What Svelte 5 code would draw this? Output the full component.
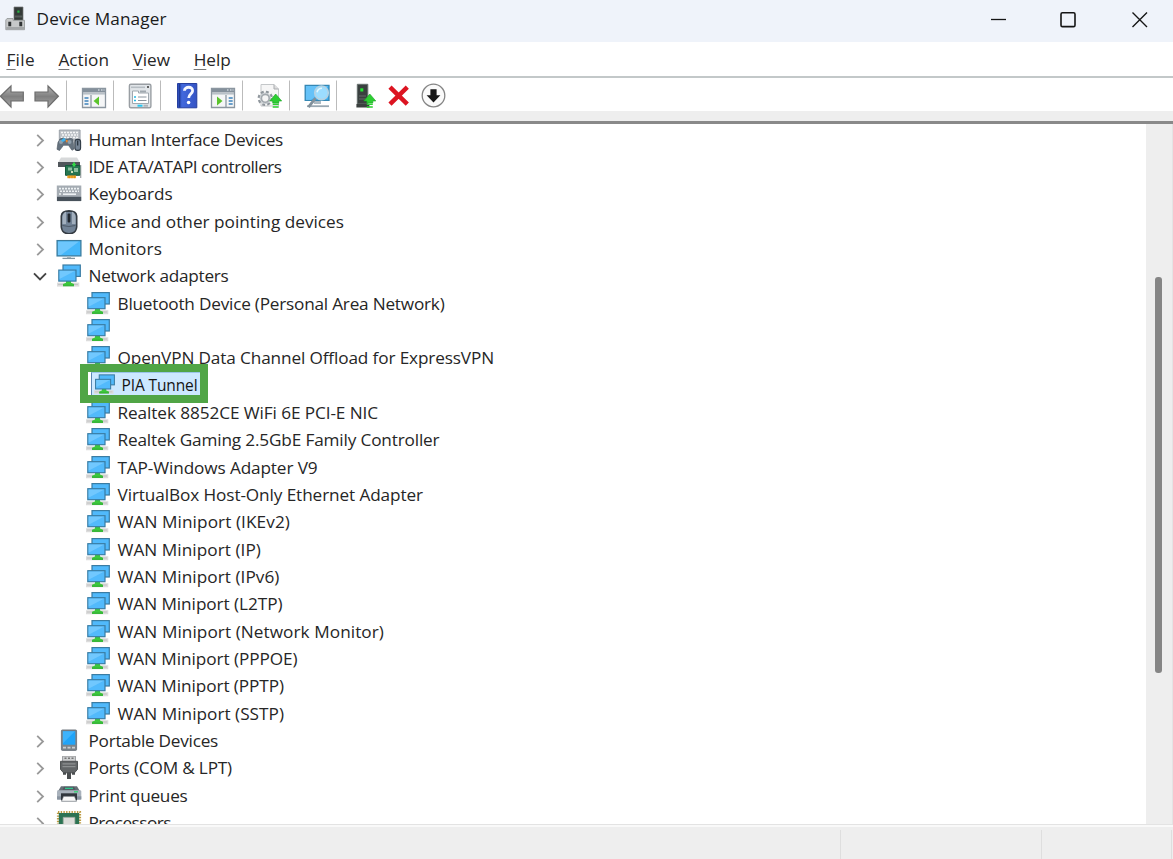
<script>
  const before = [
    ['hid', 'Human Interface Devices', 194.5],
    ['ide', 'IDE ATA/ATAPI controllers', 193],
    ['keyboard', 'Keyboards', 84],
    ['mouse', 'Mice and other pointing devices', 255.5],
    ['monitor', 'Monitors', 73.5],
  ];
  const adapters = [
    ['Bluetooth Device (Personal Area Network)', 327],
    ['', 0],
    ['OpenVPN Data Channel Offload for ExpressVPN', 376.5],
    ['', 0],
    ['Realtek 8852CE WiFi 6E PCI-E NIC', 260.5],
    ['Realtek Gaming 2.5GbE Family Controller', 322],
    ['TAP-Windows Adapter V9', 200],
    ['VirtualBox Host-Only Ethernet Adapter', 305.5],
    ['WAN Miniport (IKEv2)', 172.5],
    ['WAN Miniport (IP)', 143.5],
    ['WAN Miniport (IPv6)', 162],
    ['WAN Miniport (L2TP)', 165],
    ['WAN Miniport (Network Monitor)', 266.5],
    ['WAN Miniport (PPPOE)', 180],
    ['WAN Miniport (PPTP)', 166.5],
    ['WAN Miniport (SSTP)', 166.5],
  ];
  const after = [
    ['portable', 'Portable Devices', 129.5],
    ['port', 'Ports (COM & LPT)', 143.5],
    ['printer', 'Print queues', 99],
    ['cpu', 'Processors', 82.5],
  ];
  const menu = [['F', 'ile', 28.5], ['A', 'ction', 50.5], ['V', 'iew', 37.5], ['H', 'elp', 37]];

  // Spreads the letters so that a label takes its design width.
  function fit(node, width) {
    const n = node.textContent.length;
    if (n) node.style.letterSpacing = (width - node.getBoundingClientRect().width) / n + 'px';
  }
</script>

{#snippet upArrow()}
  <path d="M0 7L6 0l6 7H9v2H3V7z" fill="#2dce32" stroke="#18a522" stroke-width=".6" />
  <path d="M3 10.3h6M3 13h6" stroke="#2dce32" stroke-width="1.5" />
{/snippet}

{#snippet icon(name)}
  <svg class="ico" width="26" height="24" viewBox="0 0 26 24">
    {#if name === 'network'}
      <g transform="translate(0 -.9)">
        <rect x="7" y="1.9" width="17.3" height="11.4" fill="#50b9fb" stroke="#3a7ca3" stroke-width="1.2" />
        <path d="M1 19.5h22.3v4H1z" fill="#dcdcdc" />
        <path d="M2 21.3h20" stroke="#c2c2c2" />
        <path d="M10 17h5v2.7l3 1.3v2H7v-2l3-1.3z" fill="#3cc83c" />
        <path d="M7 21.5h11v1.7H7z" fill="#39b73a" />
        <rect x="2.8" y="7" width="17.2" height="11" fill="#52bafc" stroke="#3a7ca3" stroke-width="1.2" />
        <path d="M3.5 7.7h15.8L3.5 16z" fill="#8bd4ff" opacity=".55" />
      </g>
    {:else if name === 'monitor'}
      <rect x="1.1" y="3.6" width="23.8" height="15.3" fill="#45b7fa" stroke="#3b7c9e" stroke-width="1.3" />
      <path d="M2 4.4h21L5 18H2z" fill="#8fd5ff" opacity=".55" />
      <path d="M11 19.5h4v1.5h-4z" fill="#aebac0" /><path d="M6.5 21.4h12.5" stroke="#8195a0" stroke-width="1.3" />
    {:else if name === 'keyboard'}
      <path d="M.8 3.5h24.5v15.3H.8z" fill="#a5acb3" />
      <path d="M1 14.8h24.2v4.3H1z" fill="#48525b" />
      <path d="M3 6.6h20M4 9.3h19M3 12h2" stroke="#eef2f4" stroke-width="1.6" stroke-dasharray="2 1" /><path d="M7 12.2h13" stroke="#eef2f4" stroke-width="1.6" />
    {:else if name === 'hid'}
      <path d="M3.3 2h20.8v10H3.3z" fill="#bdc2c7" stroke="#8f979e" stroke-width=".8" />
      <path d="M5 4.5h17M6 7h16M5 9.5h17" stroke="#f5f6f7" stroke-width="1.4" stroke-dasharray="2 1" />
      <path d="M4 11q3-2 5 0h3q4-2 5 1l1 9-2 1.3-3.5-5H7.5l-4 5.2-2.5-1.2 1-7z" fill="#65727e" stroke="#47535e" stroke-width=".6" />
      <circle cx="5" cy="14" r="2" fill="#8fa0ad" /><circle cx="13.5" cy="14" r="2" fill="#8fa0ad" />
      <path d="M5 12.5L8 9.7l2 2.3-3 2z" fill="#3bb2ee" /><path d="M9.5 11.5l2.8 1.2-1.8 2z" fill="#ee872c" />
      <rect x="18.9" y="11.4" width="5.7" height="11" rx="2.5" fill="#758494" stroke="#2f3a45" stroke-width="1.1" /><path d="M21.7 12.5v5" stroke="#222d36" stroke-width="1.2" />
    {:else if name === 'ide'}
      <path d="M5 2.5h16l3 5H2z" fill="#d7d9da" /><path d="M2 7h22v5H2z" fill="#50565b" />
      <path d="M24.7 10v13" stroke="#9da1a3" stroke-width="1.2" />
      <path d="M9.5 10.5h14.3v9.8H9.5z" fill="#277650" stroke="#155a3c" />
      <path d="M12 12.5h4v3h-4zM18 13h4v4h-4z" fill="#8abf9d" /><path d="M15 16h2v2h-2z" fill="#d0e1b9" />
      <path d="M17 7.5h2v4h-2zM16 9h4v1.3h-4z" fill="#31d747" />
      <path d="M11.3 20.5H20v2.7h-8.7z" fill="#f2a526" /><path d="M13.3 20.5v2.7M16 20.5v2.7M18.5 20.5v2.7" stroke="#c77f17" stroke-width=".6" />
    {:else if name === 'mouse'}
      <path d="M5.3 6Q5.8 1 13 .9q7.2.1 7.7 5.1v11q-.7 6.7-7.7 6.7T5.3 17z" fill="#718295" stroke="#343b42" stroke-width="1.6" />
      <path d="M6.5 14V7q.5-4.5 3.5-5.2V14zM19.5 14V7q-.5-4.5-3.5-5.2V14z" fill="#a2afbd" />
      <path d="M6.4 15.5q6.5 2 13 0" fill="none" stroke="#4d5967" /><rect x="11.6" y="3.6" width="2.8" height="9" rx="1" fill="#20262d" />
    {:else if name === 'portable'}
      <g transform="translate(0 -.8)">
        <rect x="5.4" y="1.7" width="15.2" height="20.5" rx="1" fill="#7b848b" stroke="#59626a" stroke-width=".7" />
        <path d="M6.8 3h12.5v13.5H6.8z" fill="#20a4f8" /><path d="M7 3h12L7 15z" fill="#58c0ff" opacity=".55" />
        <path d="M7 19.4h3M11.5 19.4h3M16 19.4h3" stroke="#c9cdd0" stroke-width="1.8" />
      </g>
    {:else if name === 'port'}
      <g transform="translate(0 -.7)">
        <path d="M6.5.9h13v6h-13z" fill="#cdcfd0" stroke="#8e9193" stroke-width=".8" />
        <path d="M8.5 3h2M12 3h2M15.5 3h2" stroke="#777" stroke-width="1.5" />
        <path d="M4.5 6h17v8l-3 3.5h-11l-3-3.5z" fill="#626567" stroke="#505354" />
        <path d="M6.5 8.5h13M6.5 11.3h13" stroke="#8d9091" stroke-width="1.2" />
        <path d="M7 17h3v2.5H7zM16 17h3v2.5h-3zM11 17h4v6.8h-4z" fill="#4a4d4f" />
      </g>
    {:else if name === 'printer'}
      <g transform="translate(0 -.7)">
        <path d="M5 3h16l3 5H2z" fill="#666e76" /><path d="M8 3.5h10l1.5 3h-13z" fill="#505860" /><path d="M9 5h8" stroke="#2cdb94" stroke-width="1.1" />
        <rect x="1" y="7" width="24.3" height="9.3" rx="1.3" fill="#a9b2bc" /><path d="M1 13h24.3v3.3H1z" fill="#8994a0" />
        <path d="M18 8.5h4" stroke="#35d574" stroke-width="1.3" />
        <path d="M5 10h16v7H5z" fill="#31373d" /><path d="M7.5 13h11l2 5h-15z" fill="#f8f8f8" stroke="#555d65" stroke-width=".6" />
      </g>
    {:else if name === 'cpu'}
      <g transform="translate(0 -1)">
        <rect x="2" y="1.8" width="22" height="21" fill="none" stroke="#bd9b42" stroke-width="2.2" stroke-dasharray="1.4 1.3" />
        <path d="M2.8 3h20.4v20H2.8z" fill="#2c7353" /><path d="M7.2 7.3h11.7V20H7.2z" fill="#dddeda" stroke="#9ba69b" stroke-width=".7" />
      </g>
    {/if}
  </svg>
{/snippet}

{#snippet row(name, label, width, open = false)}
  <div class="row">
    <svg class="chev" width="16" height="16" viewBox="0 0 16 16" fill="none">
      {#if open}<path d="M2 5.3l6 6 6-6" stroke="#444" stroke-width="1.9" />
      {:else}<path d="M5.2 2.8L11 8.5l-5.8 5.7" stroke="#999" stroke-width="1.8" />{/if}
    </svg>
    {@render icon(name)}
    <span class="label" use:fit={width}>{label}</span>
  </div>
{/snippet}

<div class="window">
  <header>
    <svg class="app" width="22" height="26" viewBox="0 0 22 26">
      <path d="M9 1h9v14H9z" fill="#343a38" stroke="#777" stroke-width=".7" /><path d="M12.3 4.5h2.2v2.2h-2.2z" fill="#28b646" />
      <path d="M9.5 9.5h8v2h-8z" fill="#555d5a" />
      <path d="M2 12.5h6v1.8h11.5v9.4H.8V14z" fill="#c6c8c9" stroke="#999c9d" stroke-width=".9" />
      <path d="M1.3 21h18v2.3h-18z" fill="#a3a6a8" />
      <path d="M3.3 15.8h2.9v4.4H3.3zM14.3 15.8h2.9v4.4h-2.9z" fill="#303335" />
    </svg>
    <span class="title" use:fit={130}>Device Manager</span>
    <svg class="controls" width="160" height="20" viewBox="0 0 160 20" fill="none" stroke="#151515" stroke-width="1.3">
      <path d="M1 10.5h15" /><rect x="71" y="3.8" width="14" height="13.8" rx="1.4" stroke-width="1.6" /><path d="M142.5 3.5l14.5 14.5M157 3.5L142.5 18" stroke-width="1.4" />
    </svg>
  </header>
  <nav>
    {#each menu as [k, rest, w]}<span class="menu" use:fit={w}><u>{k}</u>{rest}</span>{/each}
  </nav>
  <div class="toolbar">
    <svg width="460" height="34" viewBox="0 0 460 34">
      <defs>
        <linearGradient id="arrow" x2="0" y2="1"><stop stop-color="#b5b5b5" /><stop offset=".5" stop-color="#808080" /><stop offset="1" stop-color="#a8a8a8" /></linearGradient>
        <linearGradient id="help" x2="1" y2="0"><stop stop-color="#2848b4" /><stop offset=".25" stop-color="#4168dc" /><stop offset="1" stop-color="#3453c4" /></linearGradient>
      </defs>
      <path d="M66.5 2.5v30M113.5 2.5v30M160.5 2.5v30M242.5 2.5v30M289.5 2.5v30M336.5 2.5v30" stroke="#bbb" />
      <path d="M.4 18.2L11 8v6h12.3v8.8H11V29z" fill="url(#arrow)" stroke="#6d6d6d" stroke-width="1.2" />
      <path d="M58.4 18.2L48 8v6H35v8.8h13V29z" fill="url(#arrow)" stroke="#6d6d6d" stroke-width="1.2" />
      <path d="M82.5 10.5h23v19h-23z" fill="#f5f6f7" stroke="#8b96a0" stroke-width="1.3" />
      <path d="M83 11h22v3.5H83z" fill="#84909b" /><path d="M83 15.8h22" stroke="#b5bdc5" stroke-width="1.5" />
      <path d="M98 12h1.5M101 12h1.5M103.5 12h1" stroke="#edf4f9" />
      <path d="M91 17v12" stroke="#84909b" stroke-width="1.2" /><path d="M84.5 20h4M84.5 23h4M84.5 26h4" stroke="#3c83bc" stroke-width="1.5" />
      <path d="M99 18.5v9L93.5 23z" fill="#5bc42d" />
      <rect x="129.4" y="6.3" width="21.5" height="23.4" rx="1.5" fill="#e1e5e9" stroke="#999ea3" stroke-width="1.4" />
      <path d="M131 9.3h14" stroke="#b6bdc3" stroke-width="1.6" /><path d="M147 8l2 2m0-2l-2 2" stroke="#555" stroke-width=".9" />
      <path d="M132.5 13h6v2h10v10.5h-16z" fill="#fff" stroke="#a0a8af" /><path d="M140 13.5h6" stroke="#a0a8af" stroke-width="2" />
      <path d="M134 19h2M134 22.5h2" stroke="#26b9e6" stroke-width="1.5" /><path d="M138 19h8.5M138 22.5h8.5" stroke="#8a949d" />
      <path d="M137.5 27.7h5" stroke="#26c6f0" stroke-width="2" /><path d="M143.5 27.7h4.5" stroke="#adb4ba" stroke-width="2" />
      <path d="M177.5 5.5h19.3v24.3h-19.3z" fill="url(#help)" stroke="#263f9f" /><path d="M179.7 6v23.5" stroke="#203993" stroke-width="1.3" />
      <path d="M184.4 12.7c.2-4.6 8.5-4.6 8.2.1-.2 3.2-4 3.4-3.9 7.2" fill="none" stroke="#f5f7ff" stroke-width="2.8" /><circle cx="188.6" cy="24.5" r="1.8" fill="#fff" />
      <path d="M211.5 10.5h23v19h-23z" fill="#f5f6f7" stroke="#8b96a0" stroke-width="1.3" />
      <path d="M212 11h22v3.5h-22z" fill="#84909b" /><path d="M212 15.8h22" stroke="#b5bdc5" stroke-width="1.5" />
      <path d="M227 12h1.5M230 12h1.5M232.5 12h1" stroke="#edf4f9" />
      <path d="M226 17v12" stroke="#84909b" stroke-width="1.2" /><path d="M228.7 20h4M228.7 23h4M228.7 26h4" stroke="#3c83bc" stroke-width="1.5" />
      <path d="M217 18.5v9l5.5-4.5z" fill="#5bc42d" />
      <path d="M261 6.5h13l4.5 4.5v17H261z" fill="#f6f6f6" stroke="#c4c7c9" /><path d="M274 6.5V11h4.5" fill="#ddd" stroke="#aaadb0" />
      <circle cx="265.3" cy="20.3" r="6.4" fill="none" stroke="#8f969c" stroke-width="2.6" stroke-dasharray="2.8 2.2" /><circle cx="265.3" cy="20.3" r="4.3" fill="#f5f5f5" stroke="#a3a9ae" stroke-width="2.4" />
      <circle cx="265.3" cy="20.3" r="5.2" fill="none" stroke="#d5d9dc" stroke-width=".9" />
      <g transform="translate(269.7 16)">{@render upArrow()}</g>
      <path d="M305.2 7.3H329v15h-23.8z" fill="#3eb2f5" stroke="#3487b4" stroke-width="1.3" /><path d="M306 8h22l-17 14h-5z" fill="#81cdfa" opacity=".6" />
      <path d="M314 23h7v3h-7z" fill="#adbac3" /><path d="M307 28.2h22" stroke="#9aa8b2" stroke-width="1.8" />
      <path d="M315.5 20.2l-7 9" stroke="#81909b" stroke-width="2.8" /><circle cx="321.5" cy="14.8" r="6.8" fill="#9cddff" stroke="#b5d2e2" stroke-width="1.6" /><path d="M317 14.3q1-4 5-4" fill="none" stroke="#e4f8ff" stroke-width="1.5" />
      <path d="M357.3 6.3h10.5V26h-10.5z" fill="#3a403f" stroke="#66706d" /><path d="M356.4 26h13v3.5h-13z" fill="#3b403f" /><path d="M360.3 10.3h3v3.2h-3z" fill="#25e632" /><path d="M359 18h7M359 21h7" stroke="#626b68" />
      <g transform="translate(363.8 16)">{@render upArrow()}</g>
      <path d="M390 9.2l17.3 17M407.3 9.2L390 26.2" stroke="#dc1421" stroke-width="4.5" />
      <circle cx="433.5" cy="17.5" r="11.3" fill="#fafafa" stroke="#858585" stroke-width="1.3" /><path d="M430.4 11.2h6.2v6h3.8l-6.9 7.2-6.9-7.2h3.8z" fill="#171717" />
    </svg>
  </div>
  <div class="strip"></div>
  <main>
    <div class="tree">
      {#each before as [name, label, width]}{@render row(name, label, width)}{/each}
      {@render row('network', 'Network adapters', 140, true)}
      {#each adapters as [label, width]}
        <div class="row child">{@render icon('network')}<span class="label" use:fit={width}>{label}</span></div>
      {/each}
      {#each after as [name, label, width]}{@render row(name, label, width)}{/each}
      <div class="callout"><div class="selected">{@render icon('network')}<span use:fit={76}>PIA Tunnel</span></div></div>
    </div>
    <div class="scroll"><div class="thumb"></div></div>
  </main>
  <footer><div class="pane wide"></div><div class="pane mid"></div><div class="pane end"></div></footer>
</div>

<style>
  :global(body) { margin: 0; overflow: hidden; }
  .window { width: 1173px; height: 859px; display: flex; flex-direction: column; overflow: hidden; background: #fff; color: #262626; font: 17.2px/24px "Open Sans", "Noto Sans", sans-serif; white-space: nowrap; }
  svg { display: block; flex: none; }
  header { height: 42px; flex: none; box-sizing: border-box; background: #eff3fa; display: flex; align-items: center; padding: 0 15px 4px 5px; }
  .title { margin-left: 9.6px; color: #1b1b1b; }
  .controls { margin-left: auto; margin-right: 8px; }
  nav { height: 34px; flex: none; display: flex; align-items: center; padding: 2px 0 0 6.4px; box-sizing: border-box; gap: 23.6px; }
  u { text-decoration-thickness: 1px; text-underline-offset: 3px; text-decoration-color: #777; }
  .toolbar { height: 35px; flex: none; box-sizing: border-box; border-top: 2px solid #c3c8c9; }
  .strip { height: 13px; flex: none; box-sizing: border-box; background: #eee; border-bottom: 3px solid #898989; }
  main { height: 700px; flex: none; display: flex; border-bottom: 1px solid #e3e3e3; }
  .tree { position: relative; flex: 1; overflow: hidden; padding-top: 1.9px; }
  .row { height: 27.35px; display: flex; align-items: center; padding-left: 32px; }
  .row :global(.ico) { margin-left: 8px; }
  .label { margin-left: 6.5px; }
  .child { padding-left: 77px; }
  .child :global(.ico) { transform: translateY(-0.4px); }
  .scroll { width: 27px; background: #eee; border-right: 1px solid #e4e4e4; box-sizing: border-box; }
  .thumb { width: 7px; height: 396px; margin: 153px 0 0 9px; border-radius: 3px; background: #858585; }
  .callout { position: absolute; left: 80px; top: 240px; width: 128px; height: 39px; box-sizing: border-box; border: 8px solid #50a546; background: #fff; padding-left: 3px; }
  .selected { height: 100%; width: 109px; box-sizing: border-box; display: flex; align-items: center; background: #cce8ff; border-left: 1px solid #5b86b3; border-top: 1px solid #9ac4e8; font-size: 15.5px; color: #151515; }
  .selected :global(svg) { width: 23px; height: 21px; margin-left: 1px; }
  .selected span { margin-left: 5.5px; margin-top: 1px; }
  footer { flex: 1; background: #eee; border-top: 2px solid #f9f9f9; display: flex; padding-top: 3px; }
  .pane { box-sizing: border-box; border-right: 1px solid #dedede; }
  .wide { width: 841px; }
  .mid { width: 201px; }
  .end { width: 130px; }
</style>
